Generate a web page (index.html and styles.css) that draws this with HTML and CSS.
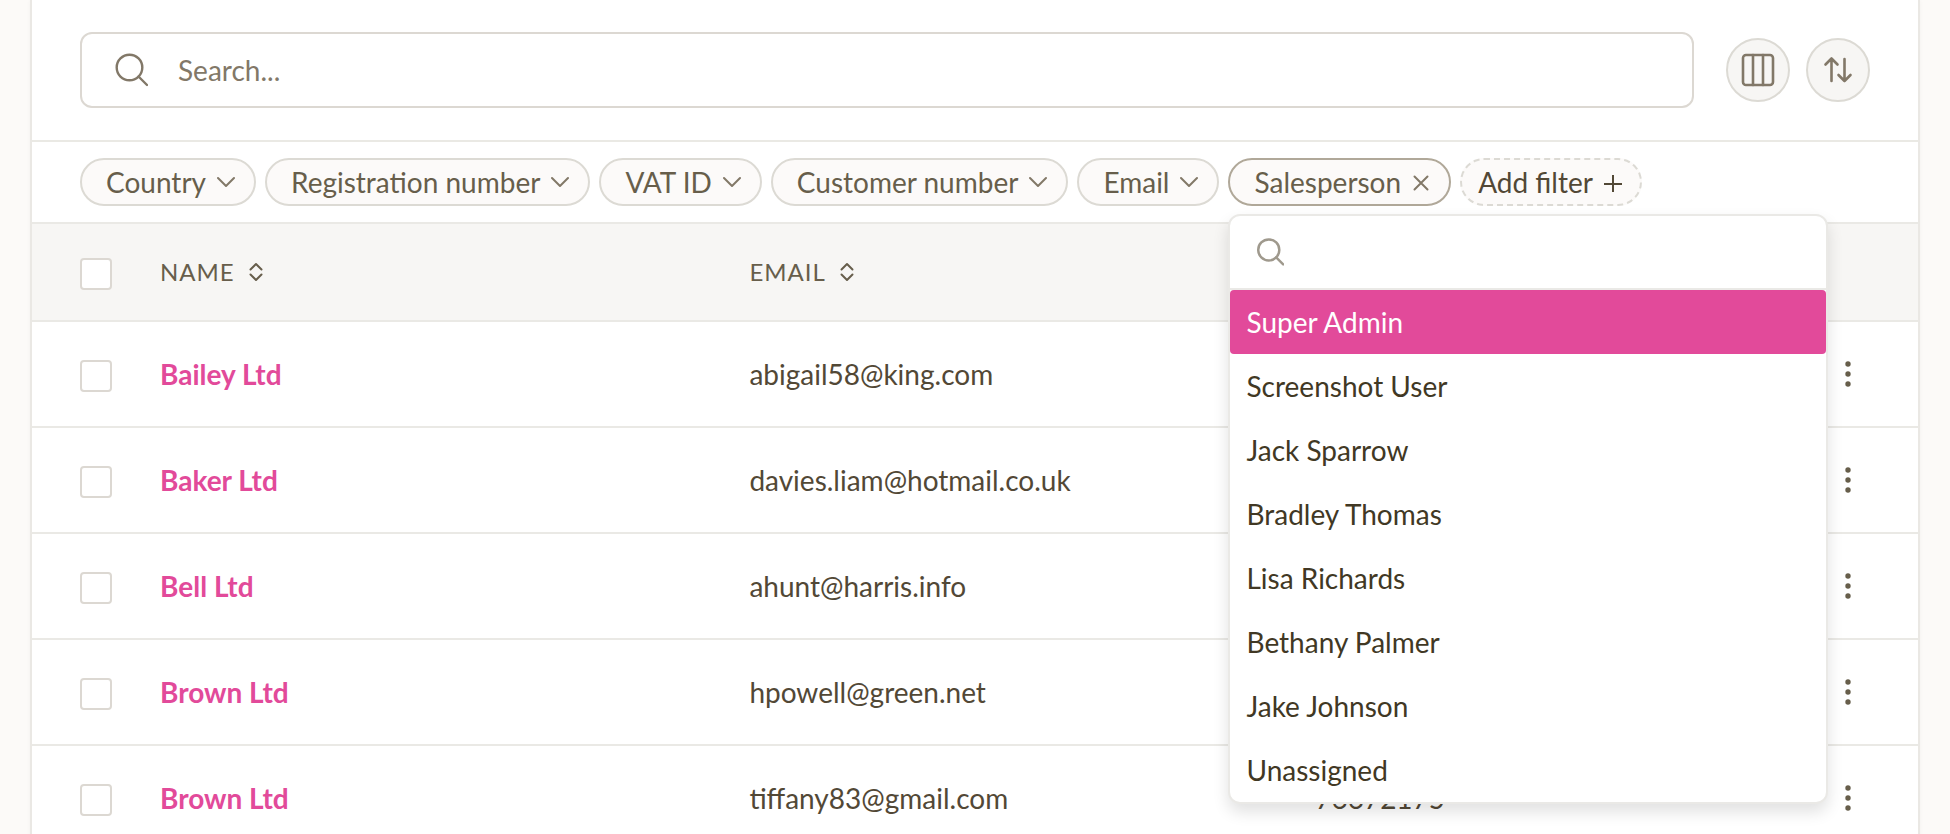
FILE: index.html
```html
<!DOCTYPE html>
<html lang="en">
<head>
    <meta charset="UTF-8">
    <meta name="viewport" content="width=device-width, initial-scale=1.0">
    <title>Customers</title>
    <link rel="stylesheet" href="styles.css">
</head>
<body>
    <!-- Shared icons -->
    <svg class="sprite" aria-hidden="true">
        <symbol id="icon-search" viewBox="0 0 34 34">
            <circle cx="15.500" cy="14.500" r="12.800"/>
            <path d="M24.500 23.500L33 32"/>
        </symbol>
        <symbol id="icon-chevron" viewBox="0 0 18 20">
            <path d="M1 6l8 8 8-8"/>
        </symbol>
        <symbol id="icon-sort" viewBox="0 0 14 20">
            <path d="M1.500 7.500L7 2l5.500 5.500M1.500 12.500L7 18l5.500-5.500"/>
        </symbol>
        <symbol id="icon-dots" viewBox="0 0 8 28">
            <circle cx="4" cy="4" r="2.700"/>
            <circle cx="4" cy="14" r="2.700"/>
            <circle cx="4" cy="24" r="2.700"/>
        </symbol>
    </svg>

    <main class="panel">
        <div class="toolbar">
            <label class="search">
                <svg class="icon search-icon"><use href="#icon-search"/></svg>
                <input type="search" placeholder="Search..." aria-label="Search">
            </label>
            <div class="toolbar-actions">
                <button type="button" class="round-button" aria-label="Columns">
                    <svg class="icon" width="34" height="34" viewBox="0 0 34 34">
                        <rect x="2" y="2" width="30" height="30" rx="3"/>
                        <path d="M12 2v30M22 2v30"/>
                    </svg>
                </button>
                <button type="button" class="round-button" aria-label="Sort">
                    <svg class="icon" width="34" height="34" viewBox="0 0 34 34">
                        <path d="M10.500 28V6M4.500 11.500l6-6 6 6M23.500 6v22M17.500 22l6 6 6-6"/>
                    </svg>
                </button>
            </div>
        </div>

        <div class="filters">
            <button type="button" class="filter">Country <svg class="icon filter-icon"><use href="#icon-chevron"/></svg></button>
            <button type="button" class="filter">Registration number <svg class="icon filter-icon"><use href="#icon-chevron"/></svg></button>
            <button type="button" class="filter">VAT ID <svg class="icon filter-icon"><use href="#icon-chevron"/></svg></button>
            <button type="button" class="filter">Customer number <svg class="icon filter-icon"><use href="#icon-chevron"/></svg></button>
            <button type="button" class="filter">Email <svg class="icon filter-icon"><use href="#icon-chevron"/></svg></button>
            <div class="filter-wrapper">
                <button type="button" class="filter open" aria-expanded="true">Salesperson
                    <svg class="icon filter-icon" viewBox="0 0 18 20"><path d="M2.500 4.500l13 13M15.500 4.500l-13 13"/></svg>
                </button>
                <div class="dropdown">
                    <label class="dropdown-search">
                        <svg class="icon"><use href="#icon-search"/></svg>
                        <input type="text" aria-label="Search salesperson">
                    </label>
                    <div class="options">
                        <button type="button" class="option active">Super Admin</button>
                        <button type="button" class="option">Screenshot User</button>
                        <button type="button" class="option">Jack Sparrow</button>
                        <button type="button" class="option">Bradley Thomas</button>
                        <button type="button" class="option">Lisa Richards</button>
                        <button type="button" class="option">Bethany Palmer</button>
                        <button type="button" class="option">Jake Johnson</button>
                        <button type="button" class="option">Unassigned</button>
                    </div>
                </div>
            </div>
            <button type="button" class="filter add-filter">Add filter
                <svg class="icon filter-icon" viewBox="0 0 18 20"><path d="M9 3v17M0 12h18"/></svg>
            </button>
        </div>

        <table class="customers">
            <thead>
                <tr>
                    <th class="col-check"><input type="checkbox" aria-label="Select all"></th>
                    <th class="col-name"><button type="button" class="sort">Name <svg class="icon"><use href="#icon-sort"/></svg></button></th>
                    <th class="col-email"><button type="button" class="sort">Email <svg class="icon"><use href="#icon-sort"/></svg></button></th>
                    <th class="col-number"></th>
                    <th class="col-menu"></th>
                </tr>
            </thead>
            <tbody>
                <tr>
                    <td class="col-check"><input type="checkbox" aria-label="Select Bailey Ltd"></td>
                    <td><a href="#">Bailey Ltd</a></td>
                    <td>abigail58@king.com</td>
                    <td></td>
                    <td class="col-menu"><button type="button" class="menu" aria-label="Actions"><svg><use href="#icon-dots"/></svg></button></td>
                </tr>
                <tr>
                    <td class="col-check"><input type="checkbox" aria-label="Select Baker Ltd"></td>
                    <td><a href="#">Baker Ltd</a></td>
                    <td>davies.liam@hotmail.co.uk</td>
                    <td></td>
                    <td class="col-menu"><button type="button" class="menu" aria-label="Actions"><svg><use href="#icon-dots"/></svg></button></td>
                </tr>
                <tr>
                    <td class="col-check"><input type="checkbox" aria-label="Select Bell Ltd"></td>
                    <td><a href="#">Bell Ltd</a></td>
                    <td>ahunt@harris.info</td>
                    <td></td>
                    <td class="col-menu"><button type="button" class="menu" aria-label="Actions"><svg><use href="#icon-dots"/></svg></button></td>
                </tr>
                <tr>
                    <td class="col-check"><input type="checkbox" aria-label="Select Brown Ltd"></td>
                    <td><a href="#">Brown Ltd</a></td>
                    <td>hpowell@green.net</td>
                    <td></td>
                    <td class="col-menu"><button type="button" class="menu" aria-label="Actions"><svg><use href="#icon-dots"/></svg></button></td>
                </tr>
                <tr>
                    <td class="col-check"><input type="checkbox" aria-label="Select Brown Ltd"></td>
                    <td><a href="#">Brown Ltd</a></td>
                    <td>tiffany83@gmail.com</td>
                    <td>76672175</td>
                    <td class="col-menu"><button type="button" class="menu" aria-label="Actions"><svg><use href="#icon-dots"/></svg></button></td>
                </tr>
            </tbody>
        </table>
    </main>
</body>
</html>
```
FILE: styles.css
```css
* {
    box-sizing: border-box;
}
body {
    margin: 0;
    padding: 0 30px;
    overflow: hidden;
    background-color: #fcfaf8;
    color: #524836;
    font-family: Lato, sans-serif;
    font-size: 28px;
    line-height: 34px;
}
button, input {
    font: inherit;
    color: inherit;
}
button {
    cursor: pointer;
}
.sprite {
    display: none;
}
.icon {
    flex: none;
    fill: none;
    stroke: currentColor;
    stroke-width: 2;
    stroke-linecap: round;
    stroke-linejoin: round;
}
.panel {
    min-height: 100vh;
    background-color: #fff;
    border: solid #eae8e4;
    border-width: 0 2px;
    box-shadow: 0 0 4px rgba(0, 0, 0, 0.04);
}

/* Search and actions */
.toolbar {
    display: flex;
    align-items: center;
    gap: 32px;
    padding: 32px 48px;
    border-bottom: 2px solid #eae9e4;
}
.search {
    display: flex;
    flex: 1;
    align-items: center;
    gap: 30px;
    height: 76px;
    padding: 0 32px;
    border: 2px solid #dcd8d2;
    border-radius: 12px;
    color: #827868;
}
.search-icon {
    width: 34px;
    height: 34px;
    stroke-width: 2.4;
}
.search input, .dropdown-search input {
    flex: 1;
    min-width: 0;
    padding: 0;
    border: none;
    outline: none;
    background: none;
}
.search input::placeholder {
    color: #827868;
    opacity: 1;
}
.toolbar-actions {
    display: flex;
    gap: 16px;
}
.round-button {
    display: flex;
    align-items: center;
    justify-content: center;
    width: 64px;
    height: 64px;
    padding: 0;
    border: 2px solid #dcdad4;
    border-radius: 50%;
    background-color: #f7f6f4;
    color: #827868;
}
.round-button .icon {
    stroke-width: 2.6;
}

/* Filters */
.filters {
    display: flex;
    gap: 9px;
    padding: 16px 48px;
    border-bottom: 2px solid #eae9e5;
}
.filter {
    display: flex;
    align-items: center;
    gap: 11px;
    height: 48px;
    padding: 0 19px 0 24px;
    border: 2px solid #dcdad4;
    border-radius: 24px;
    background-color: #fcfaf9;
    color: #675e4b;
    white-space: nowrap;
}
.filter-icon {
    width: 18px;
    height: 20px;
    color: #827868;
}
.filter.open {
    border-color: #b0a899;
}
.add-filter {
    padding: 0 18px 0 16px;
    border-style: dashed;
    color: #524836;
}
.add-filter .filter-icon {
    color: #524836;
    stroke-linecap: butt;
}
.filter-wrapper {
    position: relative;
}

/* Salesperson dropdown */
.dropdown {
    position: absolute;
    top: calc(100% + 8px);
    left: 0;
    z-index: 1;
    width: 600px;
    border: 2px solid #eae9e6;
    border-radius: 12px;
    background-color: #fff;
    box-shadow: 0 8px 16px rgba(0, 0, 0, 0.12);
}
.dropdown-search {
    display: flex;
    align-items: center;
    gap: 16px;
    height: 74px;
    padding: 0 26px;
    border-bottom: 2px solid #eae9e6;
    color: #9f998d;
}
.dropdown-search .icon {
    width: 28px;
    height: 28px;
    stroke-width: 3;
}
.option {
    display: block;
    width: 100%;
    height: 64px;
    padding: 0 16px;
    border: none;
    border-radius: 4px;
    background: none;
    color: #413824;
    text-align: left;
}
.option:last-child {
    border-radius: 4px 4px 10px 10px;
}
.option.active {
    background-color: #e24a9a;
    color: #fff;
}

/* Customer table */
.customers {
    width: 100%;
    border-collapse: separate;
    border-spacing: 0;
    table-layout: fixed;
}
.customers th, .customers td {
    height: 106px;
    padding: 0;
    border-bottom: 2px solid #eae9e5;
    text-align: left;
}
.customers th {
    height: 98px;
    background-color: #f7f6f4;
    font-weight: normal;
}
.customers .col-check {
    width: 128px;
    padding-left: 48px;
}
.col-name {
    width: 31.25%;
}
.col-email {
    width: 30%;
}
.customers .col-menu {
    width: 102px;
    padding-left: 16px;
}
.customers input {
    display: block;
    appearance: none;
    width: 32px;
    height: 32px;
    margin: 4px 0 0;
    border: 2px solid #dcd8d2;
    border-radius: 4px;
    background-color: #fff;
}
.customers a {
    color: #e24a9a;
    font-weight: bold;
    text-decoration: none;
}
.sort {
    display: flex;
    align-items: center;
    gap: 14px;
    padding: 0;
    border: none;
    background: none;
    color: #675e4b;
    font-size: 24px;
    letter-spacing: 1px;
    text-transform: uppercase;
}
.sort .icon {
    width: 14px;
    height: 20px;
}
.menu {
    display: flex;
    justify-content: center;
    width: 32px;
    padding: 0;
    border: none;
    background: none;
}
.menu svg {
    width: 8px;
    height: 28px;
    fill: #675e4b;
}
```
